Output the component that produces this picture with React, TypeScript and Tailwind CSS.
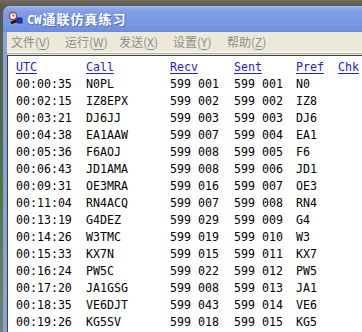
import React from "react";

const rows: string[][] = [
  ["00:00:35", "N0PL", "599 001", "599 001", "N0"],
  ["00:02:15", "IZ8EPX", "599 002", "599 002", "IZ8"],
  ["00:03:21", "DJ6JJ", "599 003", "599 003", "DJ6"],
  ["00:04:38", "EA1AAW", "599 007", "599 004", "EA1"],
  ["00:05:36", "F6AOJ", "599 008", "599 005", "F6"],
  ["00:06:43", "JD1AMA", "599 008", "599 006", "JD1"],
  ["00:09:31", "OE3MRA", "599 016", "599 007", "OE3"],
  ["00:11:04", "RN4ACQ", "599 007", "599 008", "RN4"],
  ["00:13:19", "G4DEZ", "599 029", "599 009", "G4"],
  ["00:14:26", "W3TMC", "599 019", "599 010", "W3"],
  ["00:15:33", "KX7N", "599 015", "599 011", "KX7"],
  ["00:16:24", "PW5C", "599 022", "599 012", "PW5"],
  ["00:17:20", "JA1GSG", "599 008", "599 013", "JA1"],
  ["00:18:35", "VE6DJT", "599 043", "599 014", "VE6"],
  ["00:19:26", "KG5SV", "599 018", "599 015", "KG5"],
];

const headers = ["UTC", "Call", "Recv", "Sent", "Pref", "Chk"];
const menus: [string, string][] = [
  ["文件", "V"],
  ["运行", "W"],
  ["发送", "X"],
  ["设置", "Y"],
  ["帮助", "Z"],
];

function AppIcon() {
  return (
    <svg width="16" height="16" viewBox="0 0 16 16">
      <circle cx="5" cy="5" r="3.6" fill="#ffffff" stroke="#c0302a" strokeWidth="1.4" />
      <line x1="5" y1="5" x2="5" y2="2.8" stroke="#333" strokeWidth="0.9" />
      <line x1="5" y1="5" x2="6.6" y2="5" stroke="#333" strokeWidth="0.9" />
      <path d="M2 11 L8 8.5 L10 10.5 L4 13.5 Z" fill="#1a1a1a" />
      <rect x="9" y="7" width="5" height="5" fill="#2034d8" stroke="#0a1a8a" strokeWidth="0.8" />
      <path d="M3 13.5 L9 11.5 L9.5 12.5 L4 14.5 Z" fill="#9a9a9a" />
    </svg>
  );
}

export default function App() {
  return (
    <div
      className="w-[362px] h-[332px] overflow-hidden pt-[6px] pl-[3px] flex flex-col"
      style={{
        background:
          "linear-gradient(180deg, #6f6b62 0px, #5a5a4e 6px, #4c6a3a 120px, #4f7a3a 200px, #6e8070 332px)",
      }}
    >
      <div className="flex-1 flex flex-col rounded-tl-[7px] overflow-hidden bg-[#8aa2dc]">
        {/* title bar */}
        <div
          className="h-[26px] flex items-center pl-[5px] gap-[3px] shrink-0 border-b border-[#6a88d6]"
          style={{
            background:
              "linear-gradient(180deg, #a9c0f0 0px, #8eaae9 2px, #7e9de4 6px, #7997e1 18px, #7090dd 25px)",
          }}
        >
          <AppIcon />
          <span
            className="text-white font-bold leading-none flex items-baseline"
            style={{ textShadow: "1px 1px 0 #5670c0" }}
          >
            <span
              className="text-[12px] mr-[1px]"
              style={{ fontFamily: '"DejaVu Sans Mono", monospace' }}
            >
              CW
            </span>
            <span
              className="text-[13px] tracking-[1px]"
              style={{ fontFamily: '"Noto Sans CJK SC", sans-serif' }}
            >
              通联仿真练习
            </span>
          </span>
        </div>
        {/* body */}
        <div className="flex-1 flex flex-col pl-[4px]">
          <div className="flex-1 flex flex-col bg-[#ECE9D8]">
            {/* menu bar */}
            <div
              className="h-[19px] flex items-center pl-[4px] shrink-0 text-[12px] text-[#8d8d8d]"
              style={{ fontFamily: '"Noto Sans CJK SC", sans-serif' }}
            >
              {menus.map(([t, k]) => (
                <span key={k} className="w-[54px] leading-none whitespace-nowrap">
                  {t}({<span className="underline underline-offset-2">{k}</span>})
                </span>
              ))}
            </div>
            {/* separator */}
            <div className="h-[1px] bg-[#ffffff] shrink-0 mt-[1px]" />
            <div className="h-[1px] bg-[#aca899] shrink-0" />
            <div className="h-[1px] shrink-0" />
            {/* list */}
            <div
              className="flex-1 bg-white border-l border-t border-[#404040] pt-[3px] pl-[8px]"
              style={{ fontFamily: '"DejaVu Sans Mono", monospace' }}
            >
              <div className="grid grid-cols-[70px_84px_64px_62px_42px_1fr] text-[11.6px]">
                {headers.map((h) => (
                  <div
                    key={h}
                    className="h-[17px] flex items-center text-[#2222cc] whitespace-nowrap"
                  >
                    <span className="underline underline-offset-2">{h}</span>
                  </div>
                ))}
                {rows.map((r, i) => (
                  <React.Fragment key={i}>
                    {r.map((c, j) => (
                      <div
                        key={j}
                        className="h-[17px] flex items-center text-black whitespace-pre"
                      >
                        {c}
                      </div>
                    ))}
                    <div className="h-[17px]" />
                  </React.Fragment>
                ))}
              </div>
            </div>
          </div>
        </div>
      </div>
    </div>
  );
}
